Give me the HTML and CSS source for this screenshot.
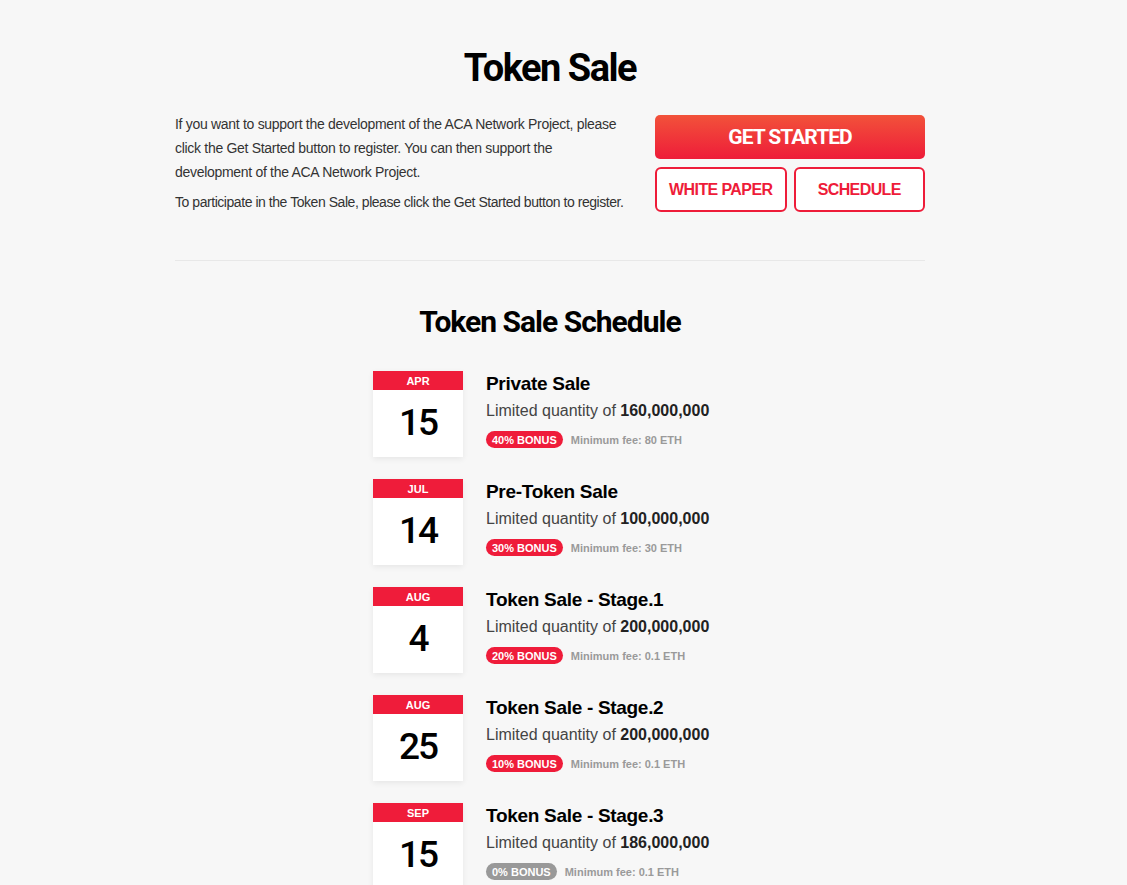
FILE: index.html
```html
<!DOCTYPE html>
<html>

	<head>
		<meta charset="UTF-8">
		<title>Token Sale</title>
		<link rel="stylesheet" href="styles.css">
	</head>

	<body>
		<div class="page">
			<h1 class="title">Token Sale</h1>

			<div class="intro">
				<div class="intro_text">
					<p>If you want to support the development of the ACA Network Project, please click the Get Started button to register. You can then support the development of the ACA Network Project.</p>
					<p class="intro_note">To participate in the Token Sale, please click the Get Started button to register.</p>
				</div>
				<div class="intro_btns">
					<a href="javascript:" class="btn_main">GET STARTED</a>
					<div class="btn_row">
						<a href="javascript:" class="btn_line">WHITE PAPER</a>
						<a href="javascript:" class="btn_line">SCHEDULE</a>
					</div>
				</div>
			</div>

			<div class="divider"></div>

			<h2 class="subtitle">Token Sale Schedule</h2>

			<ul class="sched">
				<li class="sched_item">
					<div class="cal">
						<div class="cal_month">APR</div>
						<div class="cal_day">15</div>
					</div>
					<div class="sched_info">
						<div class="sched_name">Private Sale</div>
						<div class="sched_qty">Limited quantity of <b>160,000,000</b></div>
						<div class="sched_meta">
							<span class="bonus">40% BONUS</span>
							<span class="fee">Minimum fee: 80 ETH</span>
						</div>
					</div>
				</li>
				<li class="sched_item">
					<div class="cal">
						<div class="cal_month">JUL</div>
						<div class="cal_day">14</div>
					</div>
					<div class="sched_info">
						<div class="sched_name">Pre-Token Sale</div>
						<div class="sched_qty">Limited quantity of <b>100,000,000</b></div>
						<div class="sched_meta">
							<span class="bonus">30% BONUS</span>
							<span class="fee">Minimum fee: 30 ETH</span>
						</div>
					</div>
				</li>
				<li class="sched_item">
					<div class="cal">
						<div class="cal_month">AUG</div>
						<div class="cal_day">4</div>
					</div>
					<div class="sched_info">
						<div class="sched_name">Token Sale - Stage.1</div>
						<div class="sched_qty">Limited quantity of <b>200,000,000</b></div>
						<div class="sched_meta">
							<span class="bonus">20% BONUS</span>
							<span class="fee">Minimum fee: 0.1 ETH</span>
						</div>
					</div>
				</li>
				<li class="sched_item">
					<div class="cal">
						<div class="cal_month">AUG</div>
						<div class="cal_day">25</div>
					</div>
					<div class="sched_info">
						<div class="sched_name">Token Sale - Stage.2</div>
						<div class="sched_qty">Limited quantity of <b>200,000,000</b></div>
						<div class="sched_meta">
							<span class="bonus">10% BONUS</span>
							<span class="fee">Minimum fee: 0.1 ETH</span>
						</div>
					</div>
				</li>
				<li class="sched_item">
					<div class="cal">
						<div class="cal_month">SEP</div>
						<div class="cal_day">15</div>
					</div>
					<div class="sched_info">
						<div class="sched_name">Token Sale - Stage.3</div>
						<div class="sched_qty">Limited quantity of <b>186,000,000</b></div>
						<div class="sched_meta">
							<span class="bonus bonus_off">0% BONUS</span>
							<span class="fee">Minimum fee: 0.1 ETH</span>
						</div>
					</div>
				</li>
			</ul>
		</div>
	</body>

</html>
```

FILE: styles.css
```css
body {
	margin: 0;
	background-color: #f7f7f7;
	font-family: "Liberation Sans", Arial, sans-serif;
	color: #333;
}

.page {
	width: 750px;
	margin: 0 0 0 175px;
	padding-top: 44px;
}

.title,
.subtitle {
	margin: 0;
	text-align: center;
	font-family: Roboto, "Liberation Sans", sans-serif;
	font-weight: bold;
	color: #000;
}

.title {
	font-size: 38px;
	line-height: 48px;
	letter-spacing: -1.5px;
}

.subtitle {
	margin-top: 43px;
	font-size: 30px;
	line-height: 36px;
	letter-spacing: -1px;
}

/* 介绍 + 按钮 */
.intro {
	display: flex;
	justify-content: space-between;
	margin-top: 20px;
}

.intro_text {
	width: 452px;
	font-size: 14px;
	line-height: 24px;
	letter-spacing: -0.3px;
}

.intro_text p {
	margin: 0 0 6px;
}

.intro_text .intro_note {
	margin-bottom: 0;
	letter-spacing: -0.45px;
}

.intro_btns {
	width: 270px;
	margin-top: 3px;
}

.btn_main {
	display: block;
	height: 44px;
	line-height: 45px;
	border-radius: 5px;
	background: linear-gradient(#f2523a, #ee1c39);
	text-align: center;
	font-family: Roboto, "Liberation Sans", sans-serif;
	font-size: 21px;
	font-weight: bold;
	letter-spacing: -1px;
	color: #fff;
	text-decoration: none;
}

.btn_row {
	display: grid;
	grid-template-columns: 1fr 1fr;
	gap: 7px;
	margin-top: 8px;
}

.btn_line {
	display: block;
	height: 41px;
	line-height: 42px;
	border: 2px solid #ee1c39;
	border-radius: 6px;
	background-color: #fff;
	text-align: center;
	font-size: 16px;
	font-weight: bold;
	letter-spacing: -0.6px;
	color: #ee1c39;
	text-decoration: none;
}

.divider {
	height: 1px;
	margin-top: 46px;
	background-color: #e8e8e8;
}

/* 时间表 */
.sched {
	width: 354px;
	margin: 31px auto 0;
	padding: 0;
	list-style: none;
}

.sched_item {
	display: flex;
	gap: 23px;
	margin-bottom: 22px;
}

.cal {
	width: 90px;
	flex: none;
	background-color: #fff;
	box-shadow: 0 2px 6px rgba(0, 0, 0, .07);
}

.cal_month {
	height: 19px;
	line-height: 20px;
	background-color: #ef1c3a;
	text-align: center;
	font-size: 11px;
	font-weight: bold;
	color: #fff;
}

.cal_day {
	height: 67px;
	line-height: 66px;
	text-align: center;
	font-family: Roboto, "Liberation Sans", sans-serif;
	font-size: 37px;
	font-weight: 500;
	letter-spacing: -2px;
	color: #000;
}

.sched_name {
	font-size: 19px;
	line-height: 26px;
	font-weight: bold;
	letter-spacing: -0.3px;
	color: #000;
}

.sched_qty {
	margin-top: 2px;
	font-size: 16px;
	line-height: 24px;
	color: #444;
}

.sched_qty b {
	color: #222;
}

.sched_meta {
	display: flex;
	align-items: center;
	gap: 8px;
	margin-top: 8px;
}

.bonus {
	height: 17px;
	padding: 0 6px;
	border-radius: 9px;
	background-color: #ef1c3a;
	line-height: 18px;
	font-size: 11px;
	font-weight: bold;
	color: #fff;
}

.bonus_off {
	background-color: #999;
}

.fee {
	font-size: 11px;
	font-weight: bold;
	color: #9a9a9a;
}
```
